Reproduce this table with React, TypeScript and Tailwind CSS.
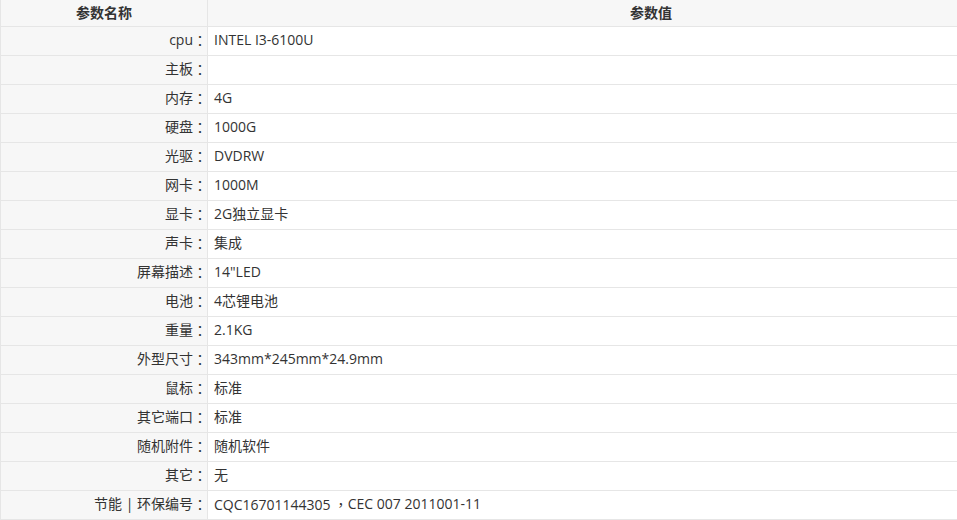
const rows: [string, string][] = [
  ["cpu", "INTEL I3-6100U"],
  ["主板", ""],
  ["内存", "4G"],
  ["硬盘", "1000G"],
  ["光驱", "DVDRW"],
  ["网卡", "1000M"],
  ["显卡", "2G独立显卡"],
  ["声卡", "集成"],
  ["屏幕描述", "14\"LED"],
  ["电池", "4芯锂电池"],
  ["重量", "2.1KG"],
  ["外型尺寸", "343mm*245mm*24.9mm"],
  ["鼠标", "标准"],
  ["其它端口", "标准"],
  ["随机附件", "随机软件"],
  ["其它", "无"],
  ["节能 | 环保编号", "CQC16701144305，CEC 007 2011001-11"],
];

// centred full-width punctuation, as in the reference
const Punct = ({ ch }: { ch: string }) => (
  <span style={{ fontFamily: '"Noto Sans CJK TC", sans-serif' }}>{ch}</span>
);

function renderValue(v: string) {
  const parts = v.split("，");
  return parts.map((p, i) => (
    <span key={i}>
      {p}
      {i < parts.length - 1 && <Punct ch=" ，" />}
    </span>
  ));
}

export default function App() {
  return (
    <div className="w-screen overflow-hidden bg-white">
      <div
        className="w-[1094px] border-l border-[#e6e6e6] text-[14px] leading-5 text-[#333]"
        style={{ fontFamily: '"Open Sans", "Noto Sans CJK SC", sans-serif' }}
      >
        {/* header */}
        <div className="grid grid-cols-[207px_1fr] h-[27px] border-b border-[#e6e6e6] bg-[#f7f7f7] font-bold">
          <div className="flex items-center justify-center border-r border-[#e6e6e6] pb-px">参数名称</div>
          <div className="flex items-center justify-center pb-px">参数值</div>
        </div>

        {rows.map(([name, value]) => (
          <div key={name} className="grid grid-cols-[207px_1fr] h-[29px] border-b border-[#e6e6e6]">
            <div className="flex items-center justify-end bg-[#f7f7f7] border-r border-[#e6e6e6] whitespace-pre pb-[2px]">
              {name}
              <Punct ch="：" />
            </div>
            <div className="flex items-center pl-[6px] bg-white whitespace-pre pb-[2px]">{renderValue(value)}</div>
          </div>
        ))}
      </div>
    </div>
  );
}
